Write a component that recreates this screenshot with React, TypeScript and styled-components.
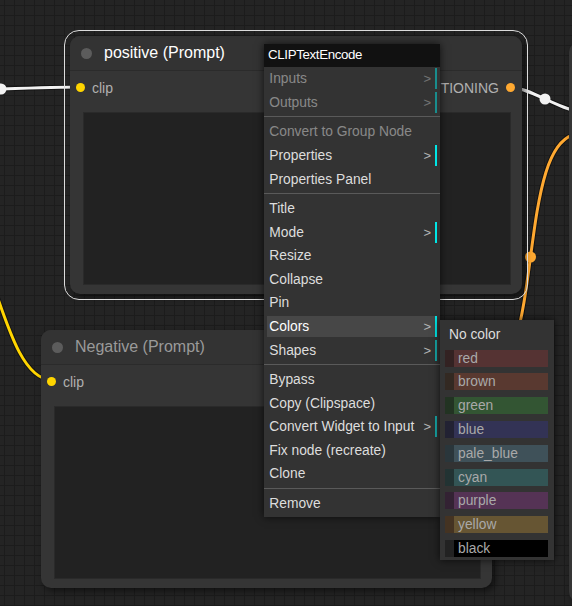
import React from 'react'
import styled, { createGlobalStyle, css } from 'styled-components'

type Pt = [number, number]

type MenuItem =
    | { sep: true }
    | {
          sep?: false
          label: string
          disabled?: boolean
          sub?: 'bright' | 'teal'
          active?: boolean
      }

type Swatch = { label: string; color: string; bg: string }

const GlobalStyle = createGlobalStyle`
    html, body {
        margin: 0;
        padding: 0;
        background: #232323;
        overflow: hidden;
    }
`

const FONT = `"Liberation Sans", Arial, sans-serif`

const Canvas = styled.div`
    position: relative;
    width: 572px;
    height: 606px;
    overflow: hidden;
    font-family: ${FONT};
    background-color: #242424;
    background-image: linear-gradient(#1c1c1c 1px, transparent 1px),
        linear-gradient(90deg, #1c1c1c 1px, transparent 1px);
    background-size: 10px 10px;
    background-position: 4px 5px;
`

const Wires = styled.svg`
    position: absolute;
    left: 0;
    top: 0;
`

const NodeBox = styled.div<{ $x: number; $y: number; $w: number; $h: number; $selected?: boolean }>`
    position: absolute;
    left: ${(p) => p.$x}px;
    top: ${(p) => p.$y}px;
    width: ${(p) => p.$w}px;
    height: ${(p) => p.$h}px;
    display: flex;
    flex-direction: column;
    background: #353535;
    border-radius: 10px;
    box-shadow: 3px 3px 7px rgba(0, 0, 0, 0.55);
    ${(p) =>
        p.$selected &&
        css`
            &::after {
                content: '';
                position: absolute;
                inset: -6px;
                border: 1.5px solid #dcdcdc;
                border-radius: 15px;
                pointer-events: none;
            }
        `}
`

const TitleBar = styled.div`
    height: 35px;
    flex: none;
    display: flex;
    align-items: center;
    gap: 12px;
    padding-left: 11px;
    background: #333333;
    border-radius: 10px 10px 0 0;
    border-bottom: 1px solid #2b2b2b;
    box-sizing: border-box;
`

const TitleDot = styled.span`
    width: 11px;
    height: 11px;
    border-radius: 50%;
    background: #5c5c5c;
`

const TitleText = styled.span<{ $dim?: boolean }>`
    font-size: 16px;
    color: ${(p) => (p.$dim ? '#9a9a9a' : '#ffffff')};
    white-space: nowrap;
`

const SlotRow = styled.div`
    height: 17px;
    margin-top: 8px;
    padding: 0 7px 0 6px;
    display: flex;
    align-items: center;
    justify-content: space-between;
    flex: none;
`

const Slot = styled.div`
    display: flex;
    align-items: center;
    gap: 7px;
    font-size: 14px;
    color: #b0b0b0;
`

const SlotDot = styled.span<{ $color: string }>`
    width: 9px;
    height: 9px;
    border-radius: 50%;
    background: ${(p) => p.$color};
`

const TextArea = styled.div`
    flex: 1;
    margin: 16px 11px 9px 13px;
    background: #222222;
    border: 1px solid #2a2a2a;
`

const Menu = styled.div`
    position: absolute;
    left: 264px;
    top: 44px;
    width: 176px;
    display: flex;
    flex-direction: column;
    padding-bottom: 1.5px;
    background: #333333;
    box-shadow: 0 0 8px rgba(0, 0, 0, 0.7);
    font-family: ${FONT};
`

const MenuTitle = styled.div`
    height: 23px;
    line-height: 22px;
    padding-left: 4px;
    background: #111111;
    color: #ffffff;
    font-size: 13.3px;
    letter-spacing: -0.35px;
`

const Entry = styled.div<{ $disabled?: boolean; $active?: boolean; $bar?: string }>`
    height: 21px;
    margin: 1.3px 3px 1.3px 3px;
    padding: 0 4px 0 2.3px;
    display: flex;
    align-items: center;
    justify-content: space-between;
    font-size: 13.8px;
    color: ${(p) => (p.$active ? '#ffffff' : '#dddddd')};
    background: ${(p) => (p.$active ? '#474747' : 'transparent')};
    border-right: 2px solid ${(p) => p.$bar ?? 'transparent'};
    opacity: ${(p) => (p.$disabled ? 0.5 : 1)};
    white-space: nowrap;
`

const Arrow = styled.span`
    font-size: 13px;
    color: #b5b5b5;
`

const Separator = styled.div`
    height: 1px;
    flex: none;
    margin: 2.2px 0 2.7px;
    background: #5a5a5a;
`

const SubMenu = styled.div`
    position: absolute;
    left: 440px;
    top: 320px;
    width: 114px;
    display: flex;
    flex-direction: column;
    padding: 2.5px 0 0;
    background: #333333;
    box-shadow: 0 0 8px rgba(0, 0, 0, 0.7);
    font-family: ${FONT};
`

const SwatchEntry = styled.div<{ $color?: string; $bg?: string }>`
    height: 17px;
    line-height: 17px;
    margin: 3.4px 6px 3.4px 5px;
    padding-left: 4px;
    font-size: 13.8px;
    color: ${(p) => (p.$bg ? '#a9a9a9' : '#dddddd')};
    background: ${(p) => p.$bg ?? 'transparent'};
    border-left: ${(p) => (p.$color ? `9px solid ${p.$color}` : 'none')};
    white-space: nowrap;
`

const menuItems: MenuItem[] = [
    { label: 'Inputs', disabled: true, sub: 'bright' },
    { label: 'Outputs', disabled: true, sub: 'bright' },
    { sep: true },
    { label: 'Convert to Group Node', disabled: true },
    { label: 'Properties', sub: 'bright' },
    { label: 'Properties Panel' },
    { sep: true },
    { label: 'Title' },
    { label: 'Mode', sub: 'bright' },
    { label: 'Resize' },
    { label: 'Collapse' },
    { label: 'Pin' },
    { label: 'Colors', sub: 'bright', active: true },
    { label: 'Shapes', sub: 'teal' },
    { sep: true },
    { label: 'Bypass' },
    { label: 'Copy (Clipspace)' },
    { label: 'Convert Widget to Input', sub: 'teal' },
    { label: 'Fix node (recreate)' },
    { label: 'Clone' },
    { sep: true },
    { label: 'Remove' },
]

const swatches: Swatch[] = [
    { label: 'red', color: '#322', bg: '#533' },
    { label: 'brown', color: '#332922', bg: '#593930' },
    { label: 'green', color: '#232', bg: '#353' },
    { label: 'blue', color: '#223', bg: '#335' },
    { label: 'pale_blue', color: '#2a363b', bg: '#3f5159' },
    { label: 'cyan', color: '#233', bg: '#355' },
    { label: 'purple', color: '#323', bg: '#535' },
    { label: 'yellow', color: '#432', bg: '#653' },
    { label: 'black', color: '#222', bg: '#000' },
]

const BAR = { bright: '#00e6e6', teal: '#17a6a6' }

// litegraph style spline: horizontal handles, a quarter of the distance long
const spline = (a: Pt, b: Pt) => {
    const d = Math.hypot(b[0] - a[0], b[1] - a[1]) * 0.25
    return `M${a[0]} ${a[1]} C${a[0] + d} ${a[1]} ${b[0] - d} ${b[1]} ${b[0]} ${b[1]}`
}
const mid = (a: Pt, b: Pt): Pt => [(a[0] + b[0]) / 2, (a[1] + b[1]) / 2]

const links: { from: Pt; to: Pt; color: string; dot?: boolean }[] = [
    { from: [-79, 91], to: [81, 87], color: '#f2f2f2', dot: true },
    { from: [510, 87], to: [580, 111], color: '#f2f2f2', dot: true },
    { from: [481, 380], to: [580, 134], color: '#ffa931', dot: true },
    { from: [-62, 200], to: [52, 380], color: '#ffd500' },
]

const GraphNode = ({
    x,
    y,
    w,
    h,
    title,
    selected,
}: {
    x: number
    y: number
    w: number
    h: number
    title: string
    selected?: boolean
}) => (
    <NodeBox $x={x} $y={y} $w={w} $h={h} $selected={selected}>
        <TitleBar>
            <TitleDot />
            <TitleText $dim={!selected}>{title}</TitleText>
        </TitleBar>
        <SlotRow>
            <Slot>
                <SlotDot $color="#ffd500" />
                clip
            </Slot>
            <Slot>
                CONDITIONING
                <SlotDot $color="#ffa931" />
            </Slot>
        </SlotRow>
        <TextArea />
    </NodeBox>
)

export default function App() {
    return (
        <>
            <GlobalStyle />
            <Canvas>
                <Wires width={572} height={606}>
                    {links.map((l, i) => (
                        <g key={i}>
                            <path d={spline(l.from, l.to)} stroke="rgba(0,0,0,0.45)" strokeWidth={5} fill="none" />
                            <path d={spline(l.from, l.to)} stroke={l.color} strokeWidth={3} fill="none" />
                            {l.dot && (
                                <circle cx={mid(l.from, l.to)[0]} cy={mid(l.from, l.to)[1]} r={5.5} fill={l.color} />
                            )}
                        </g>
                    ))}
                </Wires>

                <NodeBox $x={569} $y={42} $w={120} $h={560} />
                <GraphNode x={70} y={36} w={452} h={258} title="positive (Prompt)" selected />
                <GraphNode x={41} y={330} w={451} h={258} title="Negative (Prompt)" />

                <Menu>
                    <MenuTitle>CLIPTextEncode</MenuTitle>
                    {menuItems.map((item, i) =>
                        item.sep ? (
                            <Separator key={i} />
                        ) : (
                            <Entry
                                key={i}
                                $disabled={item.disabled}
                                $active={item.active}
                                $bar={item.sub && BAR[item.sub]}
                            >
                                <span>{item.label}</span>
                                {item.sub && <Arrow>&gt;</Arrow>}
                            </Entry>
                        )
                    )}
                </Menu>

                <SubMenu>
                    <SwatchEntry>No color</SwatchEntry>
                    {swatches.map((s) => (
                        <SwatchEntry key={s.label} $color={s.color} $bg={s.bg}>
                            {s.label}
                        </SwatchEntry>
                    ))}
                </SubMenu>
            </Canvas>
        </>
    )
}
